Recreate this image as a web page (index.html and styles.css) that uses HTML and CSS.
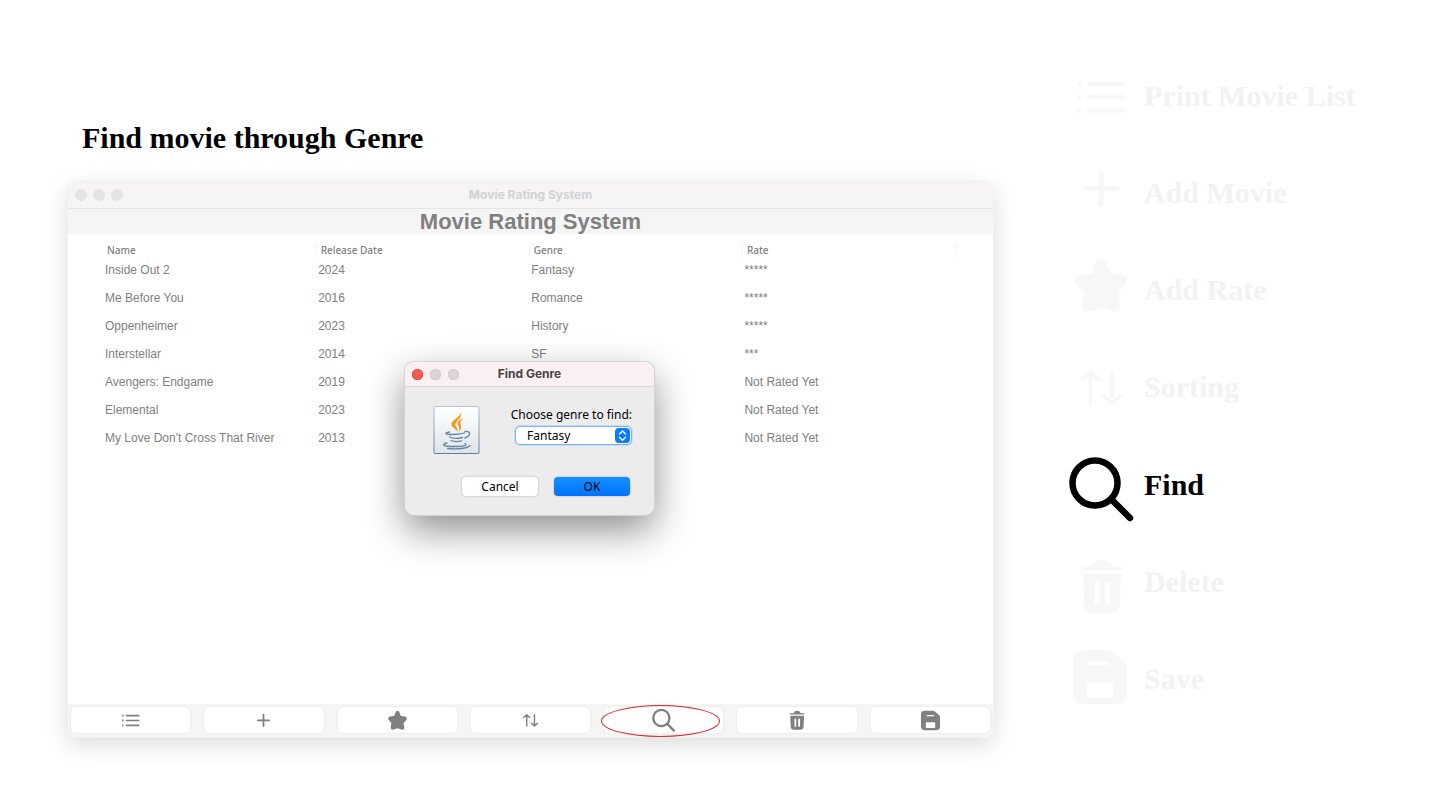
FILE: index.html
```html
<!DOCTYPE html>
<html lang="en">
<head>
<meta charset="utf-8">
<meta name="viewport" content="width=device-width, initial-scale=1">
<title>Movie Rating System</title>
<link rel="stylesheet" href="styles.css">
</head>
<body>
<svg class="sprite" aria-hidden="true">
  <defs>
    <g id="i-list" fill="none" stroke="currentColor" stroke-width="5">
      <path d="M21.500 19.500H56M21.500 33H56M21.500 46.500H56" stroke-linecap="round" stroke-width="4.500"/>
      <path d="M9.500 19.500h4M9.500 33h4M9.500 46.500h4"/>
    </g>
    <g id="i-plus" fill="none" stroke="currentColor" stroke-width="5" stroke-linecap="round">
      <path d="M33 11.500V43.500M17 27.500H49"/>
    </g>
    <g id="i-star" fill="currentColor" stroke="currentColor" stroke-width="12" stroke-linejoin="round">
      <path d="M33 7.500L38 21L53 22.500L43.500 33L46 47.500L33 43L20 47.500L22.500 33L13 22.500L28 21Z"/>
    </g>
    <g id="i-sort" fill="none" stroke="currentColor" stroke-width="4" stroke-linecap="round" stroke-linejoin="round">
      <path d="M22.500 48V17M14 24.500L22.500 17L31 24.500M44 17V48M35.500 40.500L44 48L52.500 40.500"/>
    </g>
    <g id="i-find" fill="none" stroke="currentColor" stroke-width="6.500" stroke-linecap="round">
      <circle cx="27" cy="30" r="22.500"/>
      <path d="M44 47L62 65"/>
    </g>
    <g id="i-trash">
      <path fill="currentColor" d="M14.500 16.500H24Q27 10 34 10Q41 10 44 16.500H53.500Q55 16.500 55 18.500Q55 20.500 53.500 20.500H14.500Q13 20.500 13 18.500Q13 16.500 14.500 16.500ZM15 23.500H53L52 53Q51.500 63 43 63H25Q16.500 63 16 53Z"/>
      <path d="M29 34V52M39.500 34V52" stroke="#fff" stroke-width="5" stroke-linecap="round"/>
    </g>
    <g id="i-save">
      <path fill="currentColor" d="M15.500 3H38Q42 3 45 5.500L55 14Q58.500 17 58.500 21V47Q58.500 57 48.500 57H15.500Q5.500 57 5.500 47V13Q5.500 3 15.500 3Z"/>
      <path d="M23 16.500H40" stroke="#fff" stroke-width="4" stroke-linecap="round"/>
      <rect x="19" y="35" width="26" height="16" rx="2" fill="#fff"/>
    </g>
  </defs>
</svg>

<div class="page">
  <main class="demo">
    <h1 class="demo-title">Find movie through Genre</h1>

    <section class="window" aria-label="Movie Rating System">
      <header class="titlebar">
        <span class="lights"><i></i><i></i><i></i></span>
        <span class="titlebar-text">Movie Rating System</span>
      </header>
      <h2 class="banner">Movie Rating System</h2>

      <div class="content">
        <table class="movies">
          <thead>
            <tr><th>Name</th><th>Release Date</th><th>Genre</th><th>Rate</th></tr>
          </thead>
          <tbody>
            <tr><td>Inside Out 2</td><td>2024</td><td>Fantasy</td><td>*****</td></tr>
            <tr><td>Me Before You</td><td>2016</td><td>Romance</td><td>*****</td></tr>
            <tr><td>Oppenheimer</td><td>2023</td><td>History</td><td>*****</td></tr>
            <tr><td>Interstellar</td><td>2014</td><td>SF</td><td>***</td></tr>
            <tr><td>Avengers: Endgame</td><td>2019</td><td></td><td>Not Rated Yet</td></tr>
            <tr><td>Elemental</td><td>2023</td><td></td><td>Not Rated Yet</td></tr>
            <tr><td>My Love Don't Cross That River</td><td>2013</td><td></td><td>Not Rated Yet</td></tr>
          </tbody>
        </table>
      </div>

      <nav class="toolbar" aria-label="Actions">
        <button type="button" class="tool" aria-label="Print Movie List"><svg viewBox="1 1 64 64"><use href="#i-list"/></svg></button>
        <button type="button" class="tool" aria-label="Add Movie"><svg viewBox="1 -4 64 64"><use href="#i-plus"/></svg></button>
        <button type="button" class="tool" aria-label="Add Rate"><svg viewBox="1 -4 64 64"><use href="#i-star"/></svg></button>
        <button type="button" class="tool" aria-label="Sorting"><svg viewBox="1 1 64 64"><use href="#i-sort"/></svg></button>
        <button type="button" class="tool tool-marked" aria-label="Find"><svg viewBox="1 5 64 64"><use href="#i-find"/></svg></button>
        <button type="button" class="tool" aria-label="Delete"><svg viewBox="3 5 64 64"><use href="#i-trash"/></svg></button>
        <button type="button" class="tool" aria-label="Save"><svg viewBox="0 -2 64 64"><use href="#i-save"/></svg></button>
      </nav>

      <form class="dialog" role="dialog" aria-labelledby="dialog-title">
        <header class="dialog-bar">
          <span class="lights"><i class="light-close"></i><i></i><i></i></span>
          <span class="dialog-title" id="dialog-title">Find Genre</span>
        </header>
        <div class="dialog-body">
          <svg class="java" viewBox="0 0 46 48" aria-hidden="true">
            <defs>
              <linearGradient id="paper" x1="0" y1="0" x2="0" y2="1"><stop offset="0" stop-color="#fff"/><stop offset="1" stop-color="#dfe4ea"/></linearGradient>
              <linearGradient id="frame" x1="0" y1="0" x2="0" y2="1"><stop offset="0" stop-color="#b3c6da"/><stop offset="1" stop-color="#5f7f9f"/></linearGradient>
            </defs>
            <rect x=".5" y=".5" width="45" height="47" rx="1" fill="url(#paper)" stroke="url(#frame)"/>
            <path fill="#f39a1f" d="M26.500 5.500C29 11 18 13 18 18.500C18 21.500 22.500 22.500 24 26C24.500 21.500 21.500 20.500 22 18C22.600 14.500 30 11.500 26.500 5.500Z"/>
            <path fill="#f39a1f" d="M30 12.500C25.500 13.500 23.500 16 24.500 18.500C25.200 20.500 26.500 21.500 25.500 25.500C28.500 22.500 28 20.500 27 18.500C26.300 16.500 27 14.500 30 12.500Z"/>
            <g fill="none" stroke="#6189a6" stroke-width="1.300" stroke-linecap="round">
              <path d="M16 26C10 27 12 28.500 19 28.500Q26 28.500 31 27"/>
              <path d="M31.500 25.500C38 24.500 37.500 30 31 32"/>
              <path d="M16 31Q21 33.500 29 31.500"/>
              <path d="M17.500 34.500Q22 36.500 28 34.800"/>
              <path d="M13.500 37C7 38.500 10 40.500 20 40.500C31 40.500 34.500 39 31.500 37.500"/>
              <path d="M14 42.500C24 43.500 34 42.500 36.500 39.500"/>
            </g>
          </svg>
          <div class="field">
            <label for="genre">Choose genre to find:</label>
            <div class="select-wrap">
              <select id="genre"><option>Fantasy</option><option>Romance</option><option>History</option><option>SF</option></select>
              <svg class="stepper" viewBox="0 0 15 15" aria-hidden="true"><path d="M4.500 6L7.500 3L10.500 6M4.500 9.200L7.500 12.200L10.500 9.200" fill="none" stroke="#fff" stroke-width="1.400" stroke-linecap="round" stroke-linejoin="round"/></svg>
            </div>
          </div>
        </div>
        <footer class="dialog-actions">
          <button type="button" class="btn">Cancel</button>
          <button type="button" class="btn btn-primary">OK</button>
        </footer>
      </form>
    </section>
  </main>

  <ul class="legend">
    <li><svg viewBox="0 0 64 64"><use href="#i-list"/></svg><span>Print Movie List</span></li>
    <li><svg viewBox="0 0 64 64"><use href="#i-plus"/></svg><span>Add Movie</span></li>
    <li><svg viewBox="0 0 64 64"><use href="#i-star"/></svg><span>Add Rate</span></li>
    <li><svg viewBox="0 0 64 64"><use href="#i-sort"/></svg><span>Sorting</span></li>
    <li class="current"><svg viewBox="0 0 64 64"><use href="#i-find"/></svg><span>Find</span></li>
    <li><svg viewBox="0 0 64 64"><use href="#i-trash"/></svg><span>Delete</span></li>
    <li><svg viewBox="0 0 64 64"><use href="#i-save"/></svg><span>Save</span></li>
  </ul>
</div>
</body>
</html>
```

FILE: styles.css
```css
* { box-sizing: border-box; }

body {
  margin: 0;
  background: #fff;
  color: #000;
  font-family: "Liberation Sans", Arial, sans-serif;
}

.sprite { position: absolute; width: 0; height: 0; }

.page {
  display: grid;
  grid-template-columns: minmax(0, 1fr) 372px;
  column-gap: 75px;
  padding: 0 0 72px 68px;
}

.demo { padding-top: 120px; }

.demo-title {
  margin: 0 0 26px;
  padding-left: 14px;
  font: bold 30px/36px "Liberation Serif", "Times New Roman", serif;
}

/* Main application window */
.window {
  position: relative;
  border-radius: 8px;
  background: #fff;
  box-shadow: 0 0 0 1px #f0f0f0, 0 7px 24px rgba(0, 0, 0, .15);
}

.titlebar {
  display: grid;
  grid-template-columns: 1fr auto 1fr;
  align-items: center;
  height: 27px;
  padding: 0 7px;
  border-bottom: 1px solid #e6e5e6;
  border-radius: 8px 8px 0 0;
  background: #f6f4f5;
}

.titlebar-text {
  color: #d3d2d3;
  font: bold 12px/16px Inter, sans-serif;
}

.lights { display: flex; gap: 6px; }

.lights i {
  width: 12px;
  height: 12px;
  border-radius: 50%;
  background: #e5e3e4;
}

.banner {
  margin: 0;
  background: #f5f5f5;
  color: #808080;
  font-size: 22px;
  line-height: 25px;
  text-align: center;
}

.content {
  min-height: 470px;
  padding: 9px 37px 0 35px;
}

.movies {
  width: 100%;
  border-collapse: collapse;
  table-layout: fixed;
  color: #808080;
  font-size: 12px;
}

.movies th {
  height: 14px;
  padding: 0 4px;
  font: 500 10px/14px "Noto Sans", sans-serif;
  text-align: left;
  border-right: 1px solid #f5f5f5;
}

.movies td {
  height: 28px;
  padding: 0 2px 2px;
}

.toolbar {
  display: grid;
  grid-template-columns: repeat(7, 1fr);
  gap: 14px;
  padding: 3px 3px 4px;
  border-radius: 0 0 8px 8px;
  background: #f5f5f5;
}

.tool {
  position: relative;
  display: flex;
  align-items: center;
  justify-content: center;
  height: 26px;
  padding: 0;
  border: 0;
  border-radius: 5px;
  background: #fff;
  color: #808080;
  box-shadow: 0 0 2px rgba(0, 0, 0, .1);
}

.tool svg { width: 23px; height: 23px; overflow: visible; }

.tool-marked::after {
  content: "";
  position: absolute;
  inset: -2px 3px -4px -3px;
  border: 1px solid #d8282b;
  border-radius: 50%;
}

/* Genre dialog */
.dialog {
  position: absolute;
  top: 180px;
  right: 2px;
  left: 0;
  width: 249px;
  margin: 0 auto;
  border-radius: 9px;
  background: #ececec;
  box-shadow: 0 0 1px 1px #d4d2d3, 0 15px 38px rgba(0, 0, 0, .45);
  font: 12px/16px "Noto Sans", sans-serif;
}

.dialog-bar {
  display: grid;
  grid-template-columns: 1fr auto 1fr;
  align-items: center;
  height: 25px;
  padding: 0 7px;
  border-bottom: 1px solid #dcd6d7;
  border-radius: 9px 9px 0 0;
  background: #faf0f2;
}

.dialog-bar .lights { gap: 7px; }

.dialog-bar .lights i {
  width: 11px;
  height: 11px;
  background: #ddd4d6;
  box-shadow: inset 0 0 0 1px #d2c9cb;
}

.dialog-bar .lights .light-close {
  background: #fc5b57;
  box-shadow: inset 0 0 0 1px #e2504c;
}

.dialog-title {
  color: #484446;
  font: bold 12px/16px Inter, sans-serif;
}

.dialog-body {
  display: flex;
  justify-content: space-between;
  padding: 19px 22px 0 28px;
}

.java { width: 47px; height: 48px; }

.field { display: grid; justify-items: end; align-content: start; gap: 3px; padding-top: 1px; }

.select-wrap { position: relative; width: 117px; }

.select-wrap select {
  display: block;
  width: 100%;
  height: 19px;
  padding: 0 0 0 11px;
  border: 1px solid #78b5f2;
  border-radius: 5px;
  background: #fff;
  box-shadow: 0 0 0 1px #c3ddf5;
  color: #000;
  font: inherit;
  line-height: 16px;
  appearance: none;
}

.stepper {
  position: absolute;
  top: 2px;
  right: 2px;
  width: 15px;
  height: 15px;
  border-radius: 4px;
  background: #0a7dff;
  pointer-events: none;
}

.dialog-actions {
  display: flex;
  justify-content: flex-end;
  gap: 16px;
  padding: 23px 24px 19px;
}

.btn {
  width: 76px;
  height: 19px;
  padding: 0;
  border: 0;
  border-radius: 4px;
  background: #fff;
  box-shadow: 0 0 2px rgba(0, 0, 0, .3);
  color: #000;
  font: inherit;
}

.btn-primary { background: linear-gradient(#1590ff, #0072ff); }

/* Feature legend */
.legend {
  display: grid;
  grid-auto-rows: 1fr;
  margin: 0;
  padding: 47px 0 9px;
  list-style: none;
  color: #f7f7f7;
}

.legend li {
  display: flex;
  align-items: center;
  gap: 12px;
}

.legend svg { width: 64px; height: 64px; overflow: visible; }

.legend span {
  color: #f2f2f2;
  font: bold 30px/36px "Liberation Serif", "Times New Roman", serif;
}

.legend .current,
.legend .current span { color: #000; }
```
